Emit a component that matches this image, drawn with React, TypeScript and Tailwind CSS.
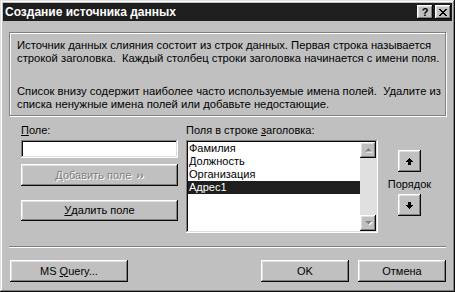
import React from 'react';

const raised =
  'shadow-[inset_-1px_-1px_#0a0a0a,inset_1px_1px_#ffffff,inset_-2px_-2px_#808080,inset_2px_2px_#dfdfdf]';
const sunken =
  'shadow-[inset_-1px_-1px_#ffffff,inset_1px_1px_#808080,inset_-2px_-2px_#dfdfdf,inset_2px_2px_#0a0a0a]';

const Button: React.FC<{ className?: string; disabled?: boolean; children: React.ReactNode }> = ({
  className = '',
  disabled,
  children,
}) => (
  <div
    className={`flex items-center justify-center bg-[#c0c0c0] ${raised} ${
      disabled ? 'text-[#808080] [text-shadow:1px_1px_#ffffff]' : 'text-black'
    } ${className}`}
  >
    {children}
  </div>
);

const ScrollArrow: React.FC<{ down?: boolean }> = ({ down }) => (
  <div className={`w-[16px] h-[16px] flex items-center justify-center bg-[#c0c0c0] ${raised}`}>
    <svg width="9" height="6" viewBox="0 0 9 6">
      {down ? (
        <>
          <polygon points="1,1 8,1 4.5,4.5" fill="#ffffff" transform="translate(1,1)" />
          <polygon points="1,1 8,1 4.5,4.5" fill="#808080" />
        </>
      ) : (
        <>
          <polygon points="1,4.5 8,4.5 4.5,1" fill="#ffffff" transform="translate(1,1)" />
          <polygon points="1,4.5 8,4.5 4.5,1" fill="#808080" />
        </>
      )}
    </svg>
  </div>
);

const OrderArrow: React.FC<{ down?: boolean }> = ({ down }) => (
  <svg width="7" height="7" viewBox="0 0 7 7" shapeRendering="crispEdges">
    <g transform={down ? 'rotate(180 3.5 3.5)' : undefined}>
      <rect x="3" y="0" width="1" height="1" fill="#000" />
      <rect x="2" y="1" width="3" height="1" fill="#000" />
      <rect x="1" y="2" width="5" height="1" fill="#000" />
      <rect x="0" y="3" width="7" height="1" fill="#000" />
      <rect x="2" y="4" width="3" height="3" fill="#000" />
    </g>
  </svg>
);

const fields = ['Фамилия', 'Должность', 'Организация', 'Адрес1'];

export default function App() {
  return (
    <div
      className={`w-[455px] h-[292px] bg-[#c0c0c0] p-[3px] flex flex-col text-[11px] leading-[13px] text-black shadow-[inset_-1px_-1px_#0a0a0a,inset_1px_1px_#dfdfdf,inset_-2px_-2px_#808080,inset_2px_2px_#ffffff] font-['Liberation_Sans',Arial,sans-serif]`}
    >
      {/* title bar */}
      <div className="h-[18px] bg-[#1e1e1e] flex items-center pl-[2px] pr-[1px]">
        <span className="text-white font-bold text-[12px] flex-1">Создание источника данных</span>
        <div className="flex gap-[2px]">
          <Button className="w-[16px] h-[14px] font-bold text-[11px] leading-none">?</Button>
          <Button className="w-[16px] h-[14px]">
            <svg width="8" height="7" viewBox="0 0 8 7" shapeRendering="crispEdges">
              <path d="M0 0h2v1h-2zM6 0h2v1h-2zM1 1h2v1h-2zM5 1h2v1h-2zM2 2h4v1h-4zM3 3h2v1h-2zM2 4h4v1h-4zM1 5h2v1h-2zM5 5h2v1h-2zM0 6h2v1h-2zM6 6h2v1h-2z" fill="#000" />
            </svg>
          </Button>
        </div>
      </div>

      <div className="flex-1 px-[6px] pt-[11px] flex flex-col">
        {/* info box */}
        <div className="h-[84px] border border-[#808080] shadow-[inset_1px_1px_#ffffff,1px_1px_#ffffff] pl-[7px] pt-[6px] whitespace-pre text-[11.25px]">
          <div>Источник данных слияния состоит из строк данных. Первая строка называется</div>
          <div>строкой заголовка.  Каждый столбец строки заголовка начинается с имени поля.</div>
          <div className="mt-[20px]">Список внизу содержит наиболее часто используемые имена полей.  Удалите из</div>
          <div>списка ненужные имена полей или добавьте недостающие.</div>
        </div>

        {/* fields */}
        <div className="mt-[8px] flex items-start">
          <div className="ml-[12px] w-[157px] flex flex-col">
            <div className="h-[13px]">
              <span className="underline">П</span>оле:
            </div>
            <div className={`mt-[3px] h-[18px] bg-white ${sunken}`} />
            <Button disabled className="mt-[6px] h-[22px]">
              Добавить поле <span className="ml-[5px] font-bold">››</span>
            </Button>
            <Button className="mt-[14px] h-[21px]">
              <span className="underline">У</span>далить поле
            </Button>
          </div>

          <div className="ml-[8px] w-[192px] flex flex-col">
            <div className="h-[13px]">
              Поля в строке <span className="underline">з</span>аголовка:
            </div>
            <div className={`mt-[3px] h-[93px] bg-white p-[2px] flex ${sunken}`}>
              <div className="flex-1 flex flex-col">
                {fields.map((f, i) => (
                  <div
                    key={f}
                    className={`h-[13px] pl-[1px] ${i === 3 ? 'bg-[#1e1e1e] text-white' : ''}`}
                  >
                    {f}
                  </div>
                ))}
              </div>
              <div className="w-[16px] bg-[#e0e0e0] flex flex-col justify-between">
                <ScrollArrow />
                <ScrollArrow down />
              </div>
            </div>
          </div>

          <div className="ml-[8px] w-[47px] mt-[26px] flex flex-col items-center">
            <Button className="w-[23px] h-[22px]">
              <OrderArrow />
            </Button>
            <div className="mt-[6px] h-[13px]">Порядок</div>
            <Button className="mt-[3px] w-[23px] h-[22px]">
              <OrderArrow down />
            </Button>
          </div>
        </div>

        {/* separator */}
        <div className="mt-[13px] h-[2px] border-t border-[#808080] border-b border-b-white" />

        {/* bottom buttons */}
        <div className="mt-[12px] flex">
          <Button className="ml-[1px] w-[118px] h-[22px]">
            MS <span className="underline ml-[3px]">Q</span>uery...
          </Button>
          <div className="flex-1" />
          <Button className="w-[88px] h-[22px]">OK</Button>
          <Button className="ml-[9px] w-[88px] h-[22px]">Отмена</Button>
        </div>
      </div>
    </div>
  );
}
